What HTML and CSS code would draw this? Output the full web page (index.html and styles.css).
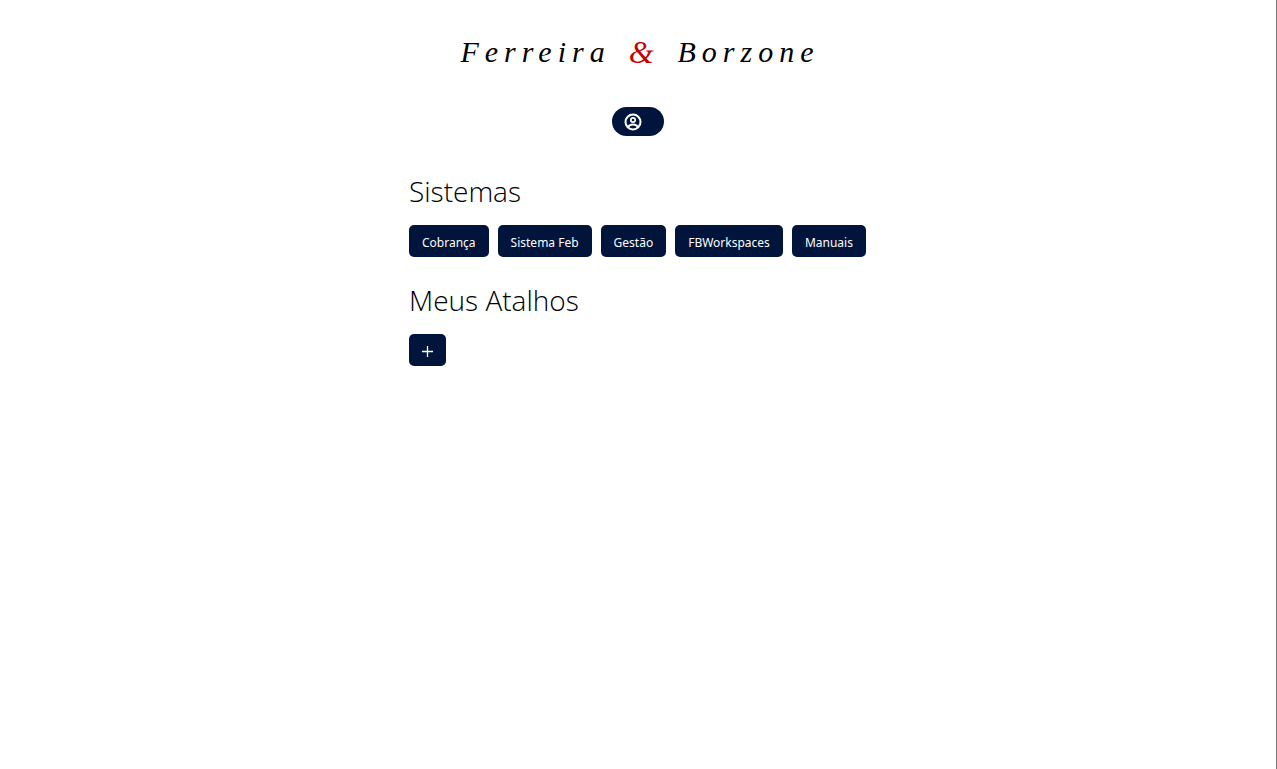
FILE: index.html
```html
<!DOCTYPE html>
<html lang="pt-BR">
<head>
<meta charset="utf-8">
<meta name="viewport" content="width=device-width, initial-scale=1">
<title>Ferreira &amp; Borzone</title>
<link rel="stylesheet" href="styles.css">
</head>
<body>
<header class="header">
  <div class="logo"><span>Ferreira</span><span class="logo-amp">&amp;</span><span>Borzone</span></div>
  <button class="account" type="button" aria-label="Conta">
    <svg class="account-icon" viewBox="0 0 18 18" fill="none" stroke="currentColor" stroke-width="2" aria-hidden="true">
      <circle cx="9" cy="9" r="7.5"/>
      <circle cx="9" cy="7" r="2.2" stroke-width="1.7"/>
      <path d="M4 14.4c.8-2 2.600-2.900 5-2.900s4.200.9 5 2.900"/>
    </svg>
  </button>
</header>
<main class="content">
  <section class="group">
    <h1 class="title">Sistemas</h1>
    <nav class="links">
      <a class="tile" href="#">Cobrança</a>
      <a class="tile" href="#">Sistema Feb</a>
      <a class="tile" href="#">Gestão</a>
      <a class="tile" href="#">FBWorkspaces</a>
      <a class="tile" href="#">Manuais</a>
    </nav>
  </section>
  <section class="group">
    <h1 class="title">Meus Atalhos</h1>
    <div class="links">
      <button class="tile" type="button" aria-label="Adicionar atalho">
        <svg class="add-icon" viewBox="0 0 11 11" stroke="currentColor" stroke-width="1.3" aria-hidden="true"><path d="M5.500 0v11M0 5.500h11"/></svg>
      </button>
    </div>
  </section>
</main>
</body>
</html>
```
FILE: styles.css
```css
* {
  box-sizing: border-box;
}

body {
  margin: 0;
  min-height: 100vh;
  border-right: 1px solid #777;
  background: #fff;
  color: #000;
  font-family: "Noto Sans", "Open Sans", sans-serif;
}

.header {
  display: flex;
  flex-direction: column;
  align-items: center;
  padding-top: 32px;
}

.logo {
  display: flex;
  align-items: center;
  gap: 18px;
  height: 40px;
  padding-left: 4px;
  font: italic 30px/40px "Liberation Serif", serif;
  letter-spacing: 6px;
}

.logo-amp {
  color: #c80000;
  font-size: 32px;
}

.account {
  display: flex;
  align-items: center;
  width: 52px;
  height: 29px;
  margin-top: 35px;
  padding: 0 12px;
  border: 0;
  border-radius: 15px;
  background: #00143c;
  color: #fff;
}

.account-icon {
  width: 18px;
  height: 18px;
}

.content {
  max-width: 458px;
  margin: 35px auto 0;
}

.group {
  margin-bottom: 23px;
}

.title {
  margin: 0 0 14px;
  font-family: "Open Sans", sans-serif;
  font-size: 28px;
  font-weight: 300;
  line-height: 40px;
}

.links {
  display: flex;
  flex-wrap: wrap;
  gap: 9px;
}

.tile {
  display: flex;
  align-items: center;
  height: 32px;
  padding: 2px 13px 0;
  border: 0;
  border-radius: 5px;
  background: #00143c;
  color: #fff;
  font-size: 12px;
  text-decoration: none;
}

.add-icon {
  width: 11px;
  height: 11px;
}
```
